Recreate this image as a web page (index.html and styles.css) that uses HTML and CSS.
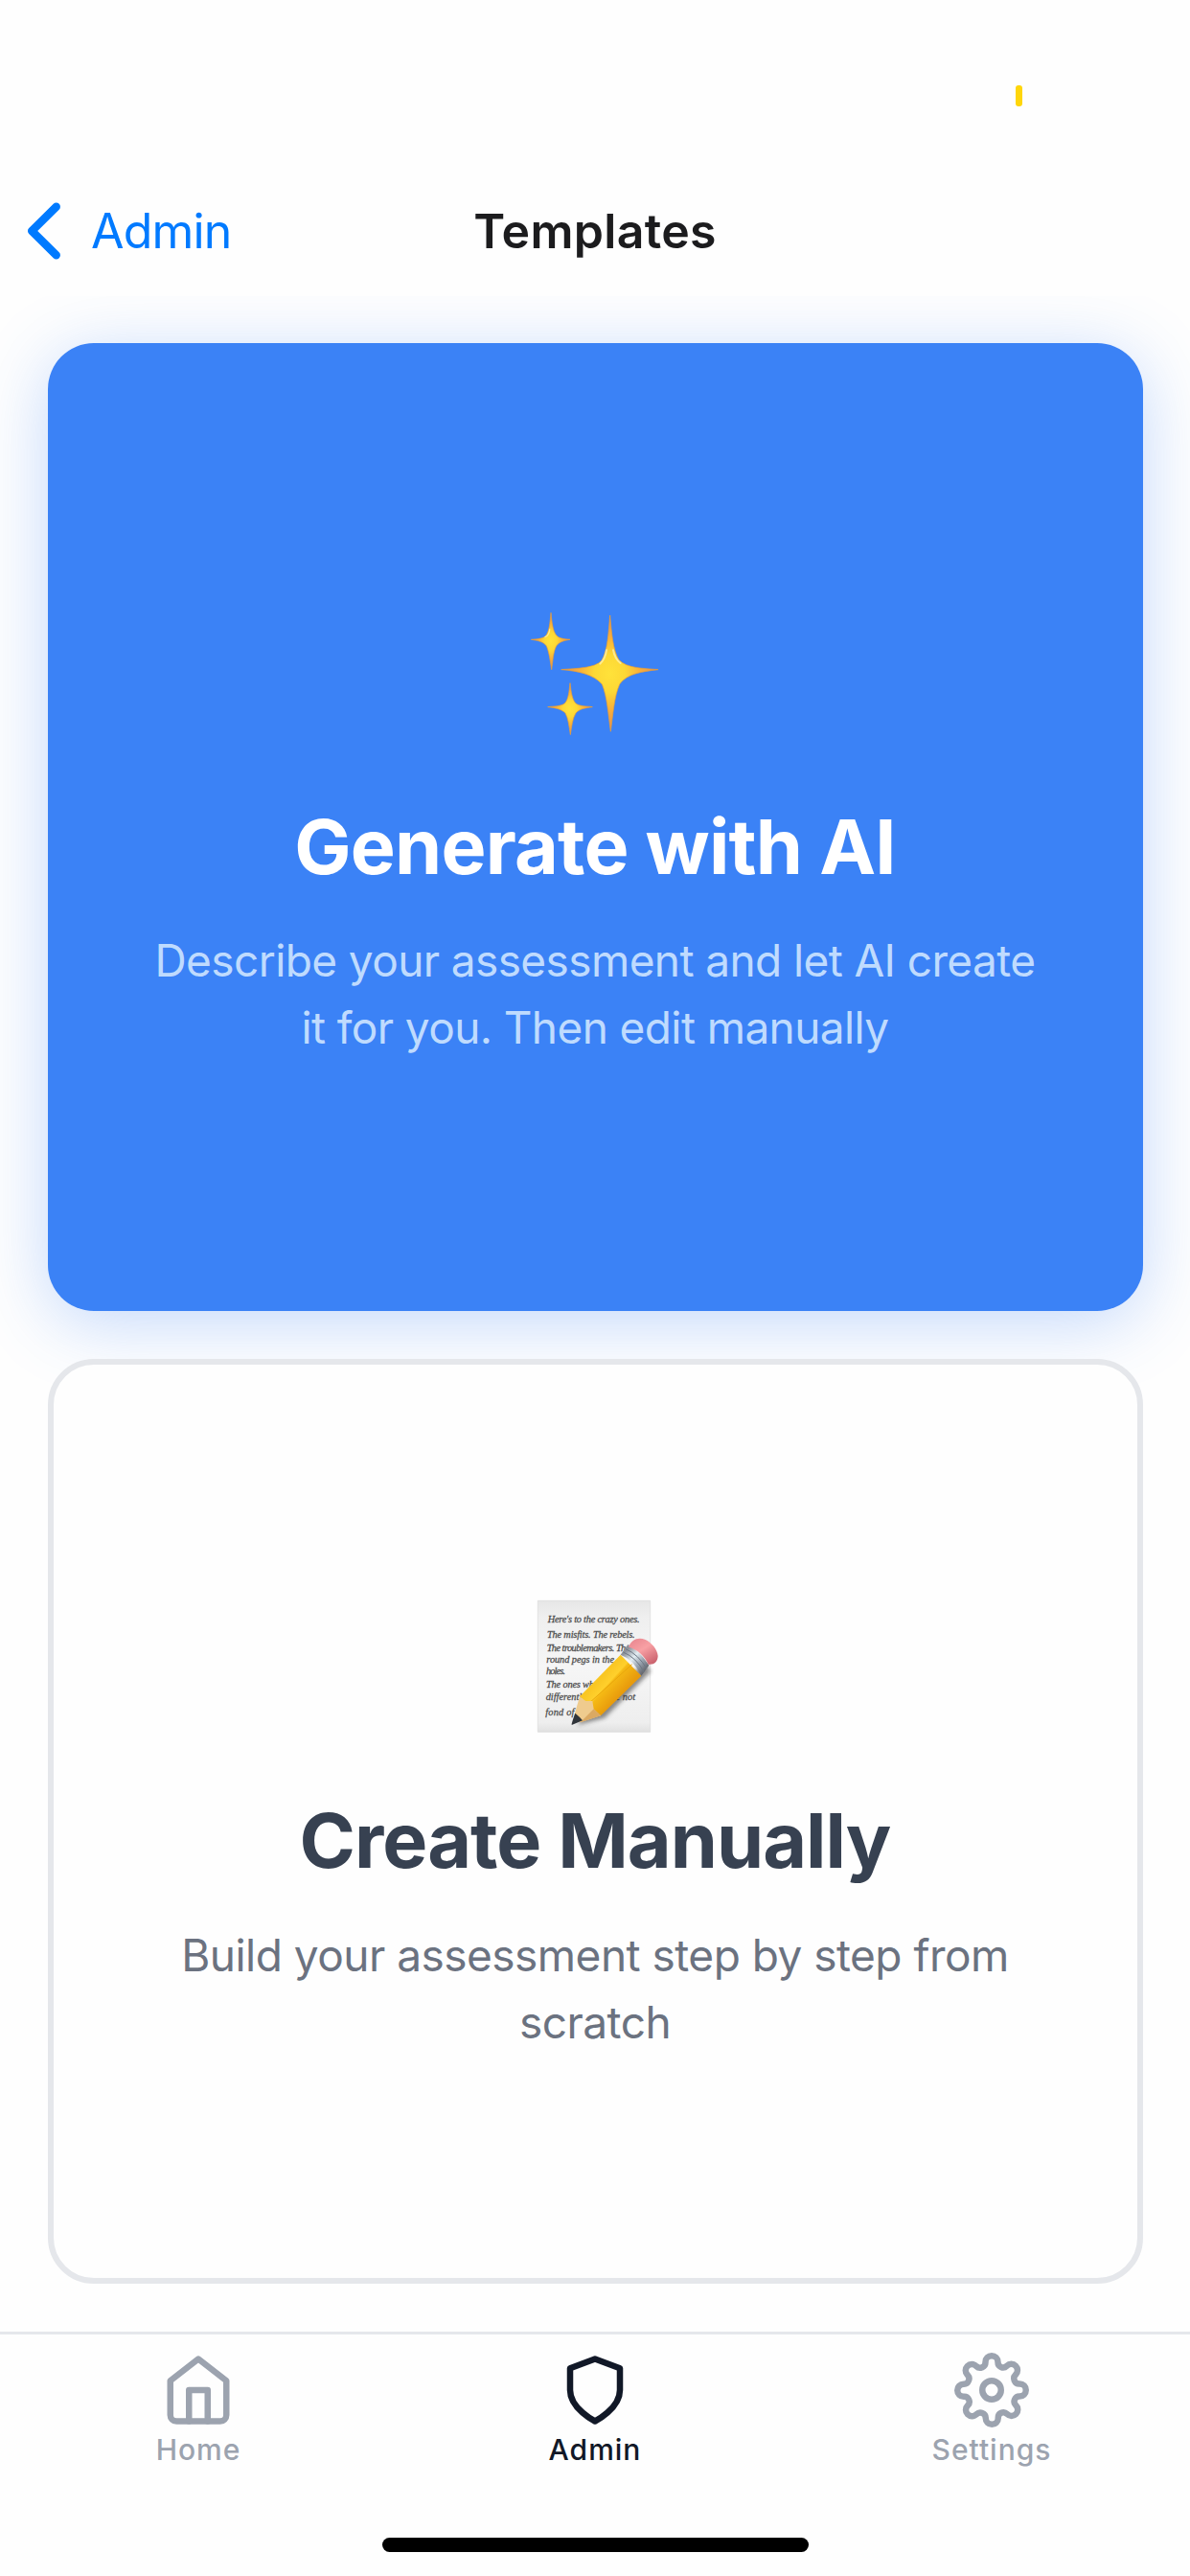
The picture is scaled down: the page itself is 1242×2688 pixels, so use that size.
FILE: index.html
```html
<!DOCTYPE html>
<html lang="en">
<head>
<meta charset="utf-8">
<title>Templates</title>
<link rel="stylesheet" href="styles.css">
</head>
<body>
<div class="screen">
  <div class="status-bar"><span class="battery-level"></span></div>
  <header class="nav-bar">
    <a class="back">
      <svg class="chevron" width="38" height="64" viewBox="0 0 38 64" fill="none" stroke="currentColor" stroke-width="8.5" stroke-linecap="round" stroke-linejoin="round"><path d="M31.7 6.8 6.2 32 31.7 57.2"/></svg>
      <span class="back-label">Admin</span>
    </a>
    <h1 class="nav-title">Templates</h1>
  </header>
  <main class="content">
    <section class="card card-primary">
      <svg class="emoji" width="180" height="180" viewBox="0 0 540 540">
        <defs>
          <radialGradient id="star"><stop offset="0" stop-color="#ffe23a"/><stop offset=".32" stop-color="#fdd835"/><stop offset=".6" stop-color="#f9b23a"/><stop offset="1" stop-color="#e08a55"/></radialGradient>
        </defs>
        <g fill="url(#star)" stroke="#f2a02e" stroke-width="2" stroke-linejoin="round">
          <path d="M317 96C322 150 326 205 345 236C370 262 420 262 468 266C420 272 370 278 347 312C330 350 326 410 319 460C312 410 308 350 292 312C266 280 215 270 164 266C215 262 268 262 291 238C310 205 312 150 317 96Z"/>
          <path d="M132 88C135 120 138 145 149 159C160 170 175 170 192 172C175 175 160 178 149 192C139 210 138 240 134 266C130 240 126 210 118 192C107 178 90 175 70 172C90 170 107 170 117 159C127 145 129 120 132 88Z"/>
          <path d="M192 308C195 335 198 358 209 371C222 382 242 380 262 383C242 386 222 388 210 402C199 420 197 446 193 470C189 446 187 420 177 402C163 388 143 386 122 383C143 380 163 382 176 371C187 358 189 335 192 308Z"/>
        </g>
        <g fill="none" stroke="#fff3b0" stroke-width="6" stroke-linecap="round" opacity=".75"><path d="M306 205Q302 232 286 248M327 205Q332 232 350 246"/><path d="M128 140Q127 158 114 164" stroke-width="4"/></g>
      </svg>
      <h2 class="card-title">Generate with AI</h2>
      <p class="card-text">Describe your assessment and let AI create<br>it for you. Then edit manually</p>
    </section>
    <section class="card card-secondary">
      <svg class="emoji" width="180" height="190" viewBox="0 0 540 570">
        <defs>
          <linearGradient id="paper" x1="0" y1="0" x2="0" y2="1"><stop offset="0" stop-color="#e6e6e6"/><stop offset=".12" stop-color="#efefef"/><stop offset=".5" stop-color="#f6f6f6"/><stop offset=".93" stop-color="#eeeeee"/><stop offset="1" stop-color="#e0e0e0"/></linearGradient>
          <linearGradient id="wood" gradientUnits="userSpaceOnUse" x1="290" y1="330" x2="350" y2="385"><stop offset="0" stop-color="#f9c623"/><stop offset=".35" stop-color="#ffd02c"/><stop offset=".42" stop-color="#f5b914"/><stop offset="1" stop-color="#e89b0c"/></linearGradient>
          <linearGradient id="metal" gradientUnits="userSpaceOnUse" x1="370" y1="245" x2="435" y2="305"><stop offset="0" stop-color="#8c9199"/><stop offset=".35" stop-color="#e3edf3"/><stop offset=".65" stop-color="#9ba5b1"/><stop offset="1" stop-color="#5f6168"/></linearGradient>
          <linearGradient id="rubber" gradientUnits="userSpaceOnUse" x1="400" y1="210" x2="450" y2="290"><stop offset="0" stop-color="#eb8b93"/><stop offset=".4" stop-color="#f8a0a4"/><stop offset="1" stop-color="#c9606c"/></linearGradient>
          <filter id="soft" x="-20%" y="-20%" width="140%" height="140%"><feGaussianBlur stdDeviation="6"/></filter>
          <clipPath id="sheet"><path d="M91 91H443V502H91Z"/></clipPath>
        </defs>
        <path d="M91 91H443V502H91Z" fill="url(#paper)" stroke="#dadada" stroke-width="2"/>
        <g class="handwriting" clip-path="url(#sheet)">
          <text x="122" y="160" textLength="288">Here's to the crazy ones.</text>
          <text x="120" y="206" textLength="275">The misfits. The rebels.</text>
          <text x="119" y="250" textLength="260">The troublemakers. The</text>
          <text x="118" y="284" textLength="212">round pegs in the</text>
          <text x="117" y="320" textLength="60">holes.</text>
          <text x="117" y="364" textLength="165">The ones who</text>
          <text x="116" y="403" textLength="280">differently. They're not</text>
          <text x="115" y="450" textLength="90">fond of</text>
        </g>
        <path d="M215 480L300 458L445 312L425 285L240 440Z" fill="#333" opacity=".55" filter="url(#soft)"/>
        <path d="M222 391L350 260L415 326L288 451Z" fill="url(#wood)"/>
        <path d="M248 415L386 290" stroke="#e9a60c" stroke-width="3"/>
        <path d="M222 391L241 405L262 405L266 430L288 451L224 472L204 453Z" fill="#efcb8e"/>
        <path d="M266 430L288 451L224 472Z" fill="#dba963"/>
        <path d="M208 443Q222 454 231 466L197 480Q196 474 208 443Z" fill="#30343a"/>
        <path d="M350 260L373 228Q408 245 439 293L415 326Q392 276 350 260Z" fill="url(#metal)"/>
        <path d="M358 252Q400 269 424 315M366 242Q407 260 432 304" fill="none" stroke="#6d7784" stroke-width="3"/>
        <path d="M375 236C385 211 405 204 428 213C447 222 466 244 467 264C466 283 455 292 437 290C425 263 402 243 375 236Z" fill="url(#rubber)"/>
      </svg>
      <h2 class="card-title">Create Manually</h2>
      <p class="card-text">Build your assessment step by step from<br>scratch</p>
    </section>
  </main>
  <nav class="tab-bar">
    <a class="tab">
      <svg class="tab-icon" viewBox="0 0 24 24"><path d="M3 9l9-7 9 7v11a2 2 0 0 1-2 2H5a2 2 0 0 1-2-2z"/><path d="M9 22V12h6v10"/></svg>
      <span>Home</span>
    </a>
    <a class="tab tab-active">
      <svg class="tab-icon" viewBox="0 0 24 24"><path d="M12 22s8-4 8-10V5l-8-3-8 3v7c0 6 8 10 8 10z"/></svg>
      <span>Admin</span>
    </a>
    <a class="tab">
      <svg class="tab-icon" viewBox="0 0 24 24"><circle cx="12" cy="12" r="3"/><path d="M19.4 15a1.65 1.65 0 0 0 .33 1.82l.06.06a2 2 0 0 1 0 2.83 2 2 0 0 1-2.83 0l-.06-.06a1.65 1.65 0 0 0-1.82-.33 1.65 1.65 0 0 0-1 1.51V21a2 2 0 0 1-2 2 2 2 0 0 1-2-2v-.09A1.65 1.65 0 0 0 9 19.4a1.65 1.65 0 0 0-1.82.33l-.06.06a2 2 0 0 1-2.83 0 2 2 0 0 1 0-2.83l.06-.06a1.65 1.65 0 0 0 .33-1.82 1.65 1.65 0 0 0-1.51-1H3a2 2 0 0 1-2-2 2 2 0 0 1 2-2h.09A1.65 1.65 0 0 0 4.6 9a1.65 1.65 0 0 0-.33-1.82l-.06-.06a2 2 0 0 1 0-2.83 2 2 0 0 1 2.83 0l.06.06a1.65 1.65 0 0 0 1.82.33H9a1.65 1.65 0 0 0 1-1.51V3a2 2 0 0 1 2-2 2 2 0 0 1 2 2v.09a1.65 1.65 0 0 0 1 1.51 1.65 1.65 0 0 0 1.82-.33l.06-.06a2 2 0 0 1 2.83 0 2 2 0 0 1 0 2.83l-.06.06a1.65 1.65 0 0 0-.33 1.82V9a1.65 1.65 0 0 0 1.51 1H21a2 2 0 0 1 2 2 2 2 0 0 1-2 2h-.09a1.65 1.65 0 0 0-1.51 1z"/></svg>
      <span>Settings</span>
    </a>
  </nav>
  <footer class="home-area"><span class="home-indicator"></span></footer>
</div>
</body>
</html>
```
FILE: styles.css
```css
* { box-sizing: border-box; }
body { margin: 0; background: #fff; font-family: Inter, "Liberation Sans", sans-serif; }
.screen { display: flex; flex-direction: column; width: 1242px; height: 2688px; background: #fefefe; overflow: hidden; }
.status-bar { display: flex; justify-content: flex-end; height: 177px; padding: 89px 175px 0 0; }
.battery-level { width: 7px; height: 22px; border-radius: 3px; background: #ffd60a; }
.nav-bar { display: grid; grid-template-columns: 1fr auto 1fr; align-items: center; height: 132px; padding: 0 27px 4px; }
.back { display: flex; align-items: center; gap: 30px; color: #007aff; font-size: 50px; line-height: 60px; letter-spacing: -.8px; }
.chevron { flex: none; margin-top: -1px; }
.nav-title { margin: 0; color: #1c1c1e; font-size: 50px; line-height: 60px; font-weight: 600; letter-spacing: .3px; }
.content { flex: 1; display: flex; flex-direction: column; gap: 50px; padding: 49px 49.5px 50px; overflow: hidden; }
.card { display: flex; flex-direction: column; align-items: center; border-radius: 48px; text-align: center; }
.card-primary { height: 1010px; padding-top: 252px; background: #3b82f6; box-shadow: 0 12px 72px rgba(59, 130, 246, .3); }
.card-secondary { height: 965px; padding-top: 216px; border: 6px solid #e5e7eb; background: #fefefe; }
.emoji { display: block; flex: none; }
.card-title { margin: 45px 0 0; font-size: 79px; line-height: 96px; font-weight: 700; letter-spacing: -.8px; }
.card-text { margin: 36px 0 0; font-size: 46px; line-height: 70px; letter-spacing: -.6px; }
.card-primary .card-title { color: #fff; }
.card-primary .card-text { color: #bfdbfe; }
.card-secondary .card-title { margin-top: 42px; color: #374151; letter-spacing: -.95px; }
.card-secondary .card-text { margin-top: 37px; color: #6b7280; letter-spacing: -.52px; }
.handwriting { fill: #444; stroke: #555; stroke-width: .8px; font: italic 31px "Liberation Serif", serif; }
.tab-bar { display: grid; grid-template-columns: repeat(3, 1fr); height: 150px; padding-top: 19px; border-top: 3px solid #e5e7eb; }
.tab { display: flex; flex-direction: column; align-items: center; gap: 5px; color: #9ca3af; font-size: 30px; line-height: 36px; font-weight: 500; letter-spacing: 1px; }
.tab-active { color: #111827; }
.tab-icon { width: 78px; height: 78px; fill: none; stroke: currentColor; stroke-width: 2; stroke-linecap: round; stroke-linejoin: round; }
.home-area { display: flex; justify-content: center; height: 105px; padding-top: 65px; }
.home-indicator { width: 445px; height: 15px; border-radius: 8px; background: #000; }
```
